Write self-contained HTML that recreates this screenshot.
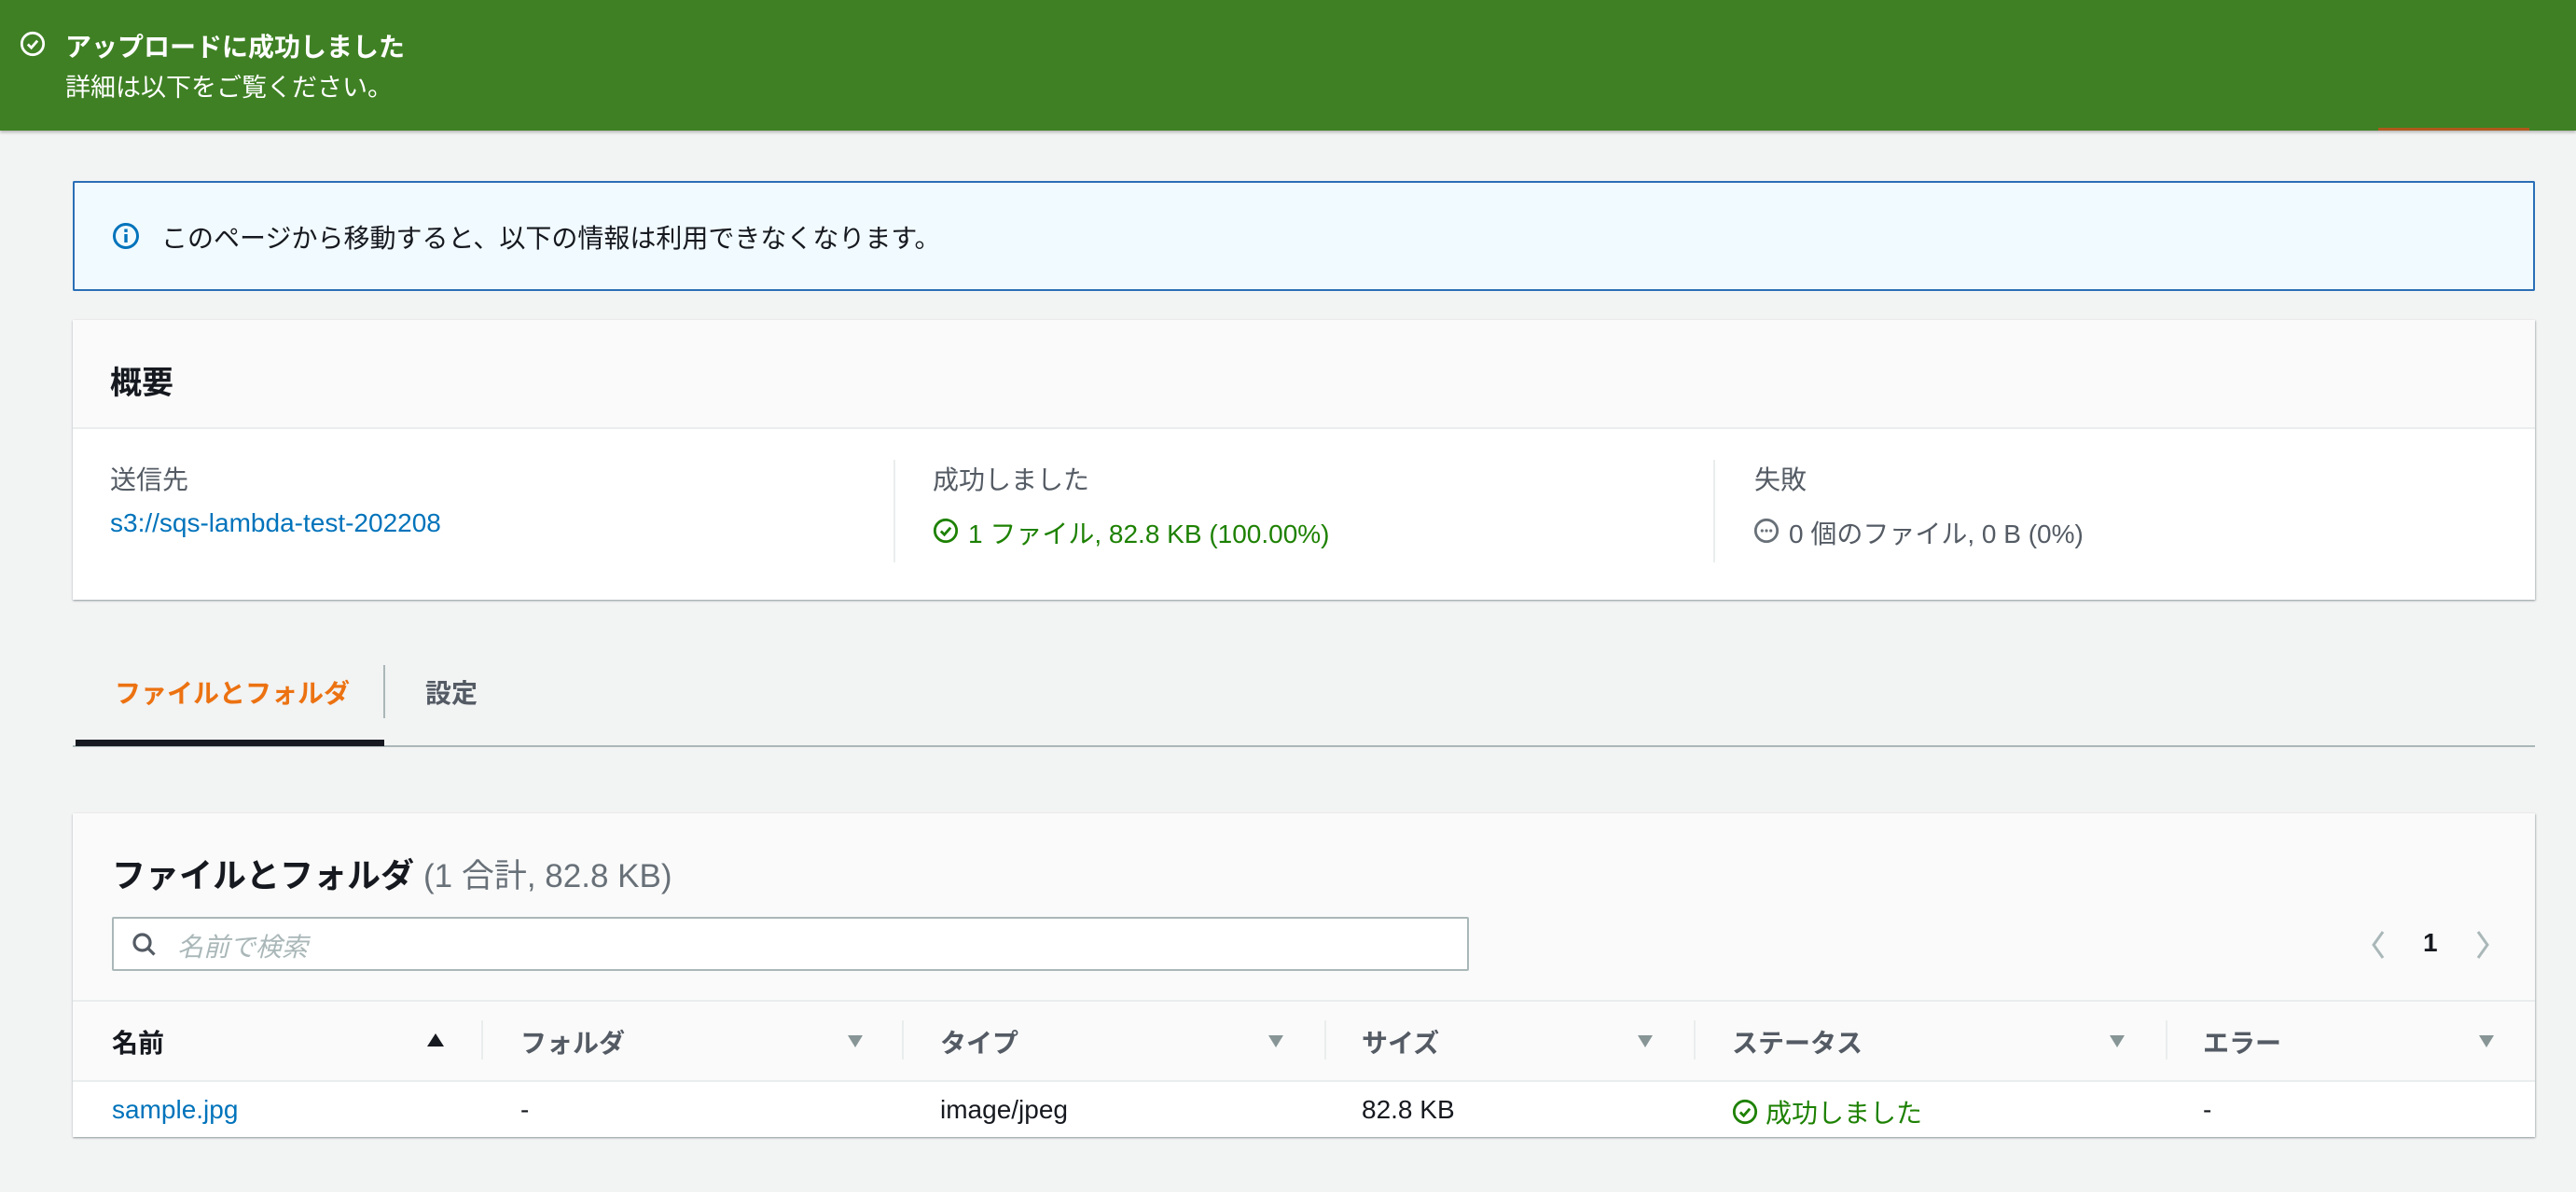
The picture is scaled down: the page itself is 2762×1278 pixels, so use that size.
<!DOCTYPE html>
<html><head><meta charset="utf-8"><style>
*{box-sizing:border-box;margin:0;padding:0}
body{width:2762px;height:1278px;background:#f2f3f3;font-family:"Liberation Sans","Noto Sans CJK JP",sans-serif;color:#16191f;position:relative;overflow:hidden;font-size:28px}
.a{position:absolute;white-space:nowrap}
.banner{position:absolute;left:0;top:0;width:2762px;height:140px;background:#3f8024;box-shadow:0 2px 3px rgba(0,0,0,.25)}
.card{position:absolute;background:#fff;box-shadow:0 1px 2px rgba(0,28,36,.3),1px 1px 2px rgba(0,28,36,.15)}
.lbl{color:#545b64}
.hd{font-weight:bold;color:#545b64}
.vd{position:absolute;width:2px;background:#eaeded}
.tri{position:absolute;width:0;height:0;border-left:8px solid transparent;border-right:8px solid transparent;border-top:13px solid #879596}
</style></head><body>
<div class="banner"></div>
<svg class="a" style="left:21px;top:33px" width="28" height="28" viewBox="0 0 30 30"><circle cx="15" cy="15" r="12.5" fill="none" stroke="#fff" stroke-width="3"/><path d="M9.5 15.5l4 4 7-8" fill="none" stroke="#fff" stroke-width="3"/></svg>
<div class="a" style="left:70px;top:29px;font-size:28px;font-weight:bold;color:#fff">アップロードに成功しました</div>
<div class="a" style="left:70px;top:72px;font-size:27px;color:#fff">詳細は以下をご覧ください。</div>
<div class="a" style="left:2550px;top:137px;width:162px;height:3px;background:#b0581c"></div>

<div class="a" style="left:78px;top:194px;width:2640px;height:118px;background:#f1faff;border:2px solid #0073bb;border-radius:2px"></div>
<div class="a" style="left:78px;top:194px;width:2640px;height:118px;border:2px solid #2a6fb6;border-radius:2px"></div>
<svg class="a" style="left:120px;top:238px" width="30" height="30" viewBox="0 0 30 30"><circle cx="15" cy="15" r="12.5" fill="none" stroke="#0073bb" stroke-width="3"/><rect x="13.3" y="13" width="3.4" height="9" fill="#0073bb"/><rect x="13.3" y="7.5" width="3.4" height="3.4" fill="#0073bb"/></svg>
<div class="a" style="left:173px;top:234px;font-size:28px">このページから移動すると、以下の情報は利用できなくなります。</div>

<div class="card" style="left:78px;top:343px;width:2640px;height:300px">
 <div class="a" style="left:0;top:0;width:2640px;height:117px;background:#fafafa;border-bottom:2px solid #eaeded"></div>
 <div class="a" style="left:40px;top:40px;font-size:34px;font-weight:bold">概要</div>
 <div class="a lbl" style="left:40px;top:150px">送信先</div>
 <div class="a" style="left:40px;top:202px;color:#0073bb">s3://sqs-lambda-test-202208</div>
 <div class="vd" style="left:880px;top:150px;height:110px"></div>
 <div class="a lbl" style="left:922px;top:150px">成功しました</div>
 <svg class="a" style="left:922px;top:212px" width="28" height="28" viewBox="0 0 30 30"><circle cx="15" cy="15" r="12.5" fill="none" stroke="#1d8102" stroke-width="3"/><path d="M9.5 15.5l4 4 7-8" fill="none" stroke="#1d8102" stroke-width="3"/></svg>
 <div class="a" style="left:960px;top:208px;color:#1d8102">1 ファイル, 82.8 KB (100.00%)</div>
 <div class="vd" style="left:1759px;top:150px;height:110px"></div>
 <div class="a lbl" style="left:1803px;top:150px">失敗</div>
 <svg class="a" style="left:1802px;top:212px" width="28" height="28" viewBox="0 0 30 30"><circle cx="15" cy="15" r="12.5" fill="none" stroke="#687078" stroke-width="3"/><circle cx="10" cy="15" r="1.7" fill="#687078"/><circle cx="15" cy="15" r="1.7" fill="#687078"/><circle cx="20" cy="15" r="1.7" fill="#687078"/></svg>
 <div class="a lbl" style="left:1840px;top:208px">0 個のファイル, 0 B (0%)</div>
</div>

<div class="a" style="left:123px;top:722px;font-size:28px;font-weight:bold;color:#ec7211">ファイルとフォルダ</div>
<div class="a" style="left:411px;top:713px;width:2px;height:57px;background:#aab7b8"></div>
<div class="a" style="left:456px;top:722px;font-size:28px;font-weight:bold;color:#545b64">設定</div>
<div class="a" style="left:78px;top:799px;width:2640px;height:2px;background:#aab7b8"></div>
<div class="a" style="left:81px;top:793px;width:331px;height:7px;background:#16191f"></div>

<div class="card" style="left:78px;top:872px;width:2640px;height:347px">
 <div class="a" style="left:0;top:0;width:2640px;height:286px;background:#fafafa"></div>
 <div class="a" style="left:0;top:200px;width:2640px;height:2px;background:#eaeded"></div>
 <div class="a" style="left:0;top:286px;width:2640px;height:2px;background:#eaeded"></div>
 <div class="a" style="left:42px;top:38px;font-size:36px;font-weight:bold">ファイルとフォルダ <span style="font-weight:normal;color:#687078;font-size:35px">(1 合計, 82.8 KB)</span></div>
 <div class="a" style="left:42px;top:111px;width:1455px;height:58px;background:#fff;border:2px solid #aab7b8;border-radius:2px"></div>
 <svg class="a" style="left:62px;top:126px" width="30" height="30" viewBox="0 0 30 30"><circle cx="12.5" cy="12.5" r="8.5" fill="none" stroke="#545b64" stroke-width="3.2"/><path d="M18.5 18.5l7 7" stroke="#545b64" stroke-width="3.2"/></svg>
 <div class="a" style="left:112px;top:122px;color:#aab7b8;font-style:italic">名前で検索</div>
 <svg class="a" style="left:2462px;top:124px" width="20" height="34" viewBox="0 0 20 34"><path d="M15 3L5 17l10 14" fill="none" stroke="#aab7b8" stroke-width="3"/></svg>
 <div class="a" style="left:2520px;top:123px;font-weight:bold">1</div>
 <svg class="a" style="left:2574px;top:124px" width="20" height="34" viewBox="0 0 20 34"><path d="M5 3l10 14L5 31" fill="none" stroke="#aab7b8" stroke-width="3"/></svg>

 <div class="a" style="left:42px;top:225px;font-weight:bold">名前</div>
 <div class="a" style="left:380px;top:236px;width:0;height:0;border-left:9px solid transparent;border-right:9px solid transparent;border-bottom:14px solid #16191f"></div>
 <div class="vd" style="left:438px;top:222px;height:42px"></div>
 <div class="a hd" style="left:480px;top:225px">フォルダ</div>
 <div class="tri" style="left:831px;top:238px"></div>
 <div class="vd" style="left:889px;top:222px;height:42px"></div>
 <div class="a hd" style="left:930px;top:225px">タイプ</div>
 <div class="tri" style="left:1282px;top:238px"></div>
 <div class="vd" style="left:1342px;top:222px;height:42px"></div>
 <div class="a hd" style="left:1382px;top:225px">サイズ</div>
 <div class="tri" style="left:1678px;top:238px"></div>
 <div class="vd" style="left:1738px;top:222px;height:42px"></div>
 <div class="a hd" style="left:1779px;top:225px">ステータス</div>
 <div class="tri" style="left:2184px;top:238px"></div>
 <div class="vd" style="left:2244px;top:222px;height:42px"></div>
 <div class="a hd" style="left:2284px;top:225px">エラー</div>
 <div class="tri" style="left:2580px;top:238px"></div>

 <div class="a" style="left:42px;top:302px;color:#0073bb">sample.jpg</div>
 <div class="a" style="left:480px;top:302px">-</div>
 <div class="a" style="left:930px;top:302px">image/jpeg</div>
 <div class="a" style="left:1382px;top:302px">82.8 KB</div>
 <svg class="a" style="left:1779px;top:306px" width="28" height="28" viewBox="0 0 30 30"><circle cx="15" cy="15" r="12.5" fill="none" stroke="#1d8102" stroke-width="3"/><path d="M9.5 15.5l4 4 7-8" fill="none" stroke="#1d8102" stroke-width="3"/></svg>
 <div class="a" style="left:1815px;top:300px;color:#1d8102">成功しました</div>
 <div class="a" style="left:2284px;top:302px">-</div>
</div>
</body></html>
